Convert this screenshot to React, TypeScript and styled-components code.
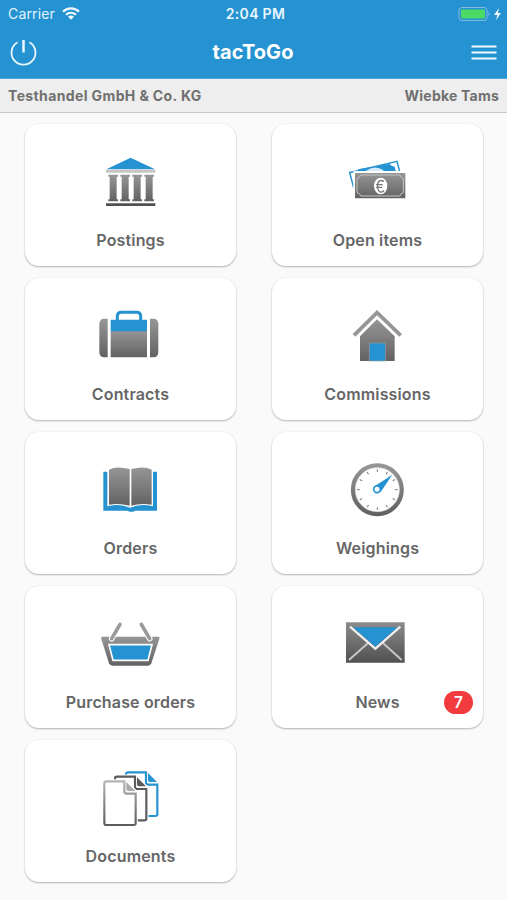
import React from "react";
import styled, { createGlobalStyle } from "styled-components";

const BLUE = "#2592d1";

const GlobalStyle = createGlobalStyle`
  body { margin: 0; background: #fafafa; font-family: Inter, "Liberation Sans", sans-serif; }
  * { box-sizing: border-box; }
`;

const Screen = styled.div`
  width: 507px;
  height: 900px;
  overflow: hidden;
  background: #fafafa;
`;

const Header = styled.header`
  height: 79px;
  background: ${BLUE};
  color: #fff;
  border-bottom: 1px solid #4ea9de;
`;

const StatusBar = styled.div`
  height: 27px;
  display: grid;
  grid-template-columns: 1fr auto 1fr;
  align-items: center;
  padding: 0 4px 0 8px;
`;

const Carrier = styled.div`
  display: flex;
  align-items: center;
  gap: 7px;
  font-size: 14px;
  line-height: 18px;
  letter-spacing: 0.15px;
  color: #e0f3ff;
`;

const Clock = styled.div`
  font-size: 14px;
  line-height: 18px;
  font-weight: 600;
  letter-spacing: 0.3px;
  color: #e9f7ff;
`;

const Battery = styled.div`
  display: flex;
  justify-content: flex-end;
`;

const TitleBar = styled.div`
  height: 49px;
  display: grid;
  grid-template-columns: 1fr auto 1fr;
  align-items: center;
  padding: 0 10px 0 9px;
`;

const Title = styled.h1`
  margin: 0;
  font-size: 20px;
  line-height: 26px;
  font-weight: 700;
  letter-spacing: 0.05px;
`;

const IconButton = styled.button<{ $end?: boolean }>`
  justify-self: ${(p) => (p.$end ? "end" : "start")};
  display: flex;
  padding: 0;
  border: 0;
  background: none;
`;

const AccountBar = styled.div`
  height: 34px;
  display: flex;
  justify-content: space-between;
  align-items: center;
  padding: 0 8px;
  background: #eee;
  border-bottom: 1px solid #c9c9c9;
  color: #707070;
  font-size: 14px;
  font-weight: 700;
`;

const AccountName = styled.span<{ $spacing: number }>`
  letter-spacing: ${(p) => p.$spacing}px;
`;

const Grid = styled.main`
  display: grid;
  grid-template-columns: 211px 211px;
  grid-auto-rows: 142px;
  gap: 12px 36px;
  padding: 11px 24px 0 25px;
`;

const Card = styled.div`
  display: flex;
  flex-direction: column;
  align-items: center;
  position: relative;
  padding-top: 21px;
  background: #fff;
  border-radius: 14px;
  box-shadow: 0 1px 2px rgba(0, 0, 0, 0.28), 0 0 2px rgba(0, 0, 0, 0.06);
`;

const Picture = styled.svg`
  width: 80px;
  height: 80px;
  flex: none;
  margin-right: 1px;
`;

const Label = styled.div`
  margin-top: 5px;
  font-size: 16px;
  line-height: 21px;
  font-weight: 600;
  letter-spacing: 0.16px;
  color: #666;
`;

const Badge = styled.span`
  position: absolute;
  right: 10px;
  bottom: 14px;
  width: 29px;
  height: 23px;
  border-radius: 12px;
  background: #f23b3f;
  color: #fff;
  font-size: 15.5px;
  line-height: 23px;
  font-weight: 600;
  text-align: center;
`;

const Bank = () => (
  <>
    <path d="M49 73 122 38 195 73Z" fill={BLUE} />
    <path d="M48 74H196V83H48Z" fill="#c5c5c5" />
    <path d="M48 175H196V183H48Z" fill="#505050" />
    {[55, 91, 127, 163].map((x) => (
      <path key={x} d={`M${x} 89h29v6h-4v68h4v6h-29v-6h4v-68h-4z`} fill="url(#gray)" />
    ))}
  </>
);

const Money = () => (
  <>
    <path d="M50 128 38 83 180 49 188 80" fill="none" stroke={BLUE} strokeWidth="4.5" />
    <path d="M55 79Q64 78 66 72L158 57Q162 64 173 65L177 80H57Z" fill={BLUE} />
    <path d="M86 78Q112 58 139 75V80H86Z" fill="#d6edf9" />
    <rect x="49" y="78" width="161" height="86" rx="3" fill="#fff" />
    <rect x="54" y="84" width="151" height="76" rx="2" fill="url(#gray)" />
    <path d="M71 90H189Q190 98 199 100V143Q190 145 189 153H71Q70 145 60 143V100Q70 98 71 90Z" fill="none" stroke="#c4c4c4" strokeWidth="3" />
    <ellipse cx="131" cy="123" rx="20" ry="25" fill="#fff" />
    <path d="M141 109C122 100 121 119 122 125C123 146 137 143 141 136M117 119H137M117 127H136" fill="none" stroke="#777" strokeWidth="4" />
  </>
);

const Suitcase = () => (
  <>
    <path d="M82 61V49Q82 37 94 37H140Q152 37 152 49V61" fill="none" stroke={BLUE} strokeWidth="9" />
    <path d="M53 56V172H43Q28 172 28 156V73Q28 56 43 56Z" fill="url(#gray)" />
    <path d="M180 56V172H190Q205 172 205 156V73Q205 56 190 56Z" fill="url(#gray)" />
    <path d="M62 92H171V172H62Z" fill="url(#gray)" />
    <path d="M62 59H171V94H62Z" fill={BLUE} />
  </>
);

const House = () => (
  <>
    <path d="M69 109 120 58 173 109V183H69Z" fill="url(#gray)" />
    <path d="M51 106 120 38 191 106" fill="none" stroke="#969696" strokeWidth="11" />
    <path d="M97 129H145V183H97Z" fill={BLUE} stroke="#999" strokeWidth="2" />
  </>
);

const Book = () => (
  <>
    <path d="M40 50H52V154Q91 145 120 158Q150 145 189 154V50H201V167H135Q127 174 112 167H40Z" fill={BLUE} />
    <path d="M57 44Q78 32 119 42V152Q87 144 57 149Z" fill="url(#gray)" />
    <path d="M124 42Q164 32 185 44V149Q152 144 124 152Z" fill="url(#gray)" />
  </>
);

const Gauge = () => (
  <>
    <circle cx="121" cy="104" r="73" fill="#fff" stroke="url(#gray)" strokeWidth="13" />
    <circle cx="121" cy="104" r="66" fill="none" stroke="#d5d5d5" strokeWidth="2" />
    {Array.from({ length: 12 }, (_, i) => (
      <path key={i} d="M121 43V51" stroke="#777" strokeWidth="3" transform={`rotate(${i * 30} 121 104)`} />
    ))}
    <path d="M109 96 166 59 131 111Z" fill={BLUE} />
    <circle cx="120" cy="103" r="10" fill="#fff" stroke={BLUE} strokeWidth="5" />
  </>
);

const Basket = () => (
  <>
    <path d="M35 80H206Q210 80 208 87L184 160Q181 167 174 167H68Q60 167 57 160L34 87Q33 80 35 80Z" fill="url(#gray)" />
    <path d="M65 86 91 42M179 86 153 42" fill="none" stroke="#fff" strokeWidth="17" strokeLinecap="round" />
    <path d="M65 86 90 43M179 86 154 43" fill="none" stroke="#9a9a9a" strokeWidth="11" strokeLinecap="round" />
    <path d="M57 104H186L174 151H69Z" fill={BLUE} stroke="#fff" strokeWidth="5" />
  </>
);

const Mail = () => (
  <>
    <path d="M27 37H203V158H27Z" fill="url(#mailGray)" />
    <path d="M36 150 94 98M194 150 137 98" stroke="#c6c6c6" strokeWidth="6" />
    <path d="M39 50 115 116 190 50" fill="none" stroke="#eee" strokeWidth="7" />
    <path d="M48 52H181L115 110Z" fill={BLUE} />
  </>
);

const sheets = [
  { x: 65, y: -27, color: BLUE, fold: BLUE },
  { x: 32, y: -14, color: "#5b5b5b", fold: "#5b5b5b" },
  { x: 0, y: 0, color: "url(#sheetGray)", fold: "#aaa" },
];

const Documents = () => (
  <>
    {sheets.map((s) => (
      <g key={s.x} transform={`translate(${s.x} ${s.y})`}>
        <path d="M49 64H104L137 98V190Q137 195 131 195H49Q43 195 43 189V70Q43 64 49 64Z" fill="#fff" stroke="#fff" strokeWidth="13" />
        <path d="M49 64H103V94Q103 101 110 101H137V190Q137 195 131 195H49Q43 195 43 189V70Q43 64 49 64Z" fill="#fff" stroke={s.color} strokeWidth="6.5" />
        <path d="M109 66 136 93H115Q109 93 109 87Z" fill={s.fold} />
      </g>
    ))}
  </>
);

const items = [
  { label: "Postings", Art: Bank, top: 0 },
  { label: "Open items", Art: Money, top: 0 },
  { label: "Contracts", Art: Suitcase, top: -3 },
  { label: "Commissions", Art: House, top: -3 },
  { label: "Orders", Art: Book, top: -6 },
  { label: "Weighings", Art: Gauge, top: -6 },
  { label: "Purchase orders", Art: Basket, top: -9 },
  { label: "News", Art: Mail, top: -9, count: 7 },
  { label: "Documents", Art: Documents, top: 3 },
];

const Gradients = () => (
  <defs>
    <linearGradient id="gray" x1="0" y1="0" x2="0" y2="1">
      <stop offset="0" stopColor="#969696" />
      <stop offset="1" stopColor="#626262" />
    </linearGradient>
    <linearGradient id="mailGray" x1="0" y1="0" x2="0" y2="1">
      <stop offset="0" stopColor="#8c8c8c" />
      <stop offset="1" stopColor="#505050" />
    </linearGradient>
    <linearGradient id="sheetGray" x1="0" y1="0" x2="0" y2="1">
      <stop offset="0" stopColor="#b5b5b5" />
      <stop offset="1" stopColor="#5c5c5c" />
    </linearGradient>
  </defs>
);

export default function App() {
  return (
    <Screen>
      <GlobalStyle />
      <Header>
        <StatusBar>
          <Carrier>
            Carrier
            <svg width="18" height="13" viewBox="0 0 18 13" fill="none" stroke="#f4fbff" strokeWidth="2.2">
              <path d="M1 4.6C5.6.3 12.4.3 17 4.6M4 7.7C6.8 5.1 11.2 5.1 14 7.7" />
              <path d="M6 9.7Q9 7.1 12 9.7L9 12.7Z" fill="#f4fbff" stroke="none" />
            </svg>
          </Carrier>
          <Clock>2:04 PM</Clock>
          <Battery>
            <svg width="45" height="16" viewBox="0 0 45 16">
              <rect x="1" y="1.5" width="28" height="13" rx="3" fill="none" stroke="#82bde1" />
              <rect x="3" y="3.5" width="24" height="9" rx="1" fill="#4cd964" />
              <path d="M30.5 6Q33 8 30.5 10Z" fill="#82bde1" />
              <path d="M41 2 36 9H39.4L38 14.2 43 7H39.8Z" fill="#effaff" />
            </svg>
          </Battery>
        </StatusBar>
        <TitleBar>
          <IconButton aria-label="Log out">
            <svg width="29" height="30" viewBox="0 0 29 30" fill="none" stroke="#e8f6fd">
              <path d="M8.5 5.3A12 12 0 1 0 20.5 5.3" strokeWidth="1.8" />
              <path d="M14.5 3V15.5" strokeWidth="2.5" />
            </svg>
          </IconButton>
          <Title>tacToGo</Title>
          <IconButton $end aria-label="Menu">
            <svg width="26" height="20" viewBox="0 0 26 20" fill="none" stroke="#f0faff" strokeWidth="2.2">
              <path d="M.5 4.5H25.5M.5 10.5H25.5M.5 16.5H25.5" />
            </svg>
          </IconButton>
        </TitleBar>
      </Header>
      <AccountBar>
        <AccountName $spacing={0.38}>Testhandel GmbH &amp; Co. KG</AccountName>
        <AccountName $spacing={0.22}>Wiebke Tams</AccountName>
      </AccountBar>
      <Grid>
        {items.map(({ label, Art, top, count }) => (
          <Card key={label}>
            <Picture viewBox={`0 ${top} 240 240`}>
              <Gradients />
              <Art />
            </Picture>
            <Label>{label}</Label>
            {count !== undefined && <Badge>{count}</Badge>}
          </Card>
        ))}
      </Grid>
    </Screen>
  );
}
